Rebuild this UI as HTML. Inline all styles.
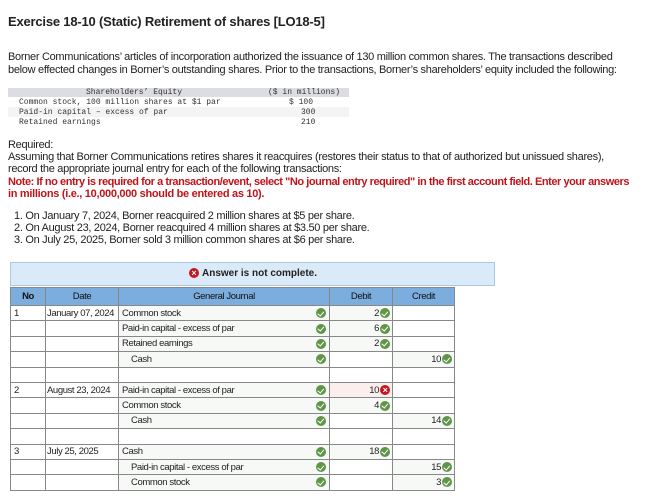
<!DOCTYPE html>
<html><head><meta charset="utf-8"><style>
*{margin:0;padding:0;box-sizing:border-box}
body{width:668px;height:499px;background:#fff;font-family:"Liberation Sans",Arial,sans-serif;color:#222;position:relative;overflow:hidden}
.a{position:absolute;white-space:nowrap}
.t{font-size:11px;letter-spacing:-0.3px}
.m{font-family:"Liberation Mono",monospace;font-size:8px;color:#333}
.red{color:#c0141a;font-weight:bold}
table{position:absolute;left:10px;top:287px;border-collapse:collapse;font-size:9.5px;letter-spacing:-0.4px}
td,th{border:1px solid #888;height:15.4px;line-height:13px;padding:0 3px;white-space:nowrap}
th{background:#7badde;height:18px;font-weight:normal;color:#111}
.g{background:#f7f9f7}
.r{text-align:right;padding-right:2px}
.ok{display:inline-block;width:10px;height:10px;border-radius:50%;background:#5f9548;vertical-align:middle;position:relative;margin-left:1px}
.ok:after{content:"";position:absolute;left:3px;top:1.5px;width:2.5px;height:4.5px;border:solid #fff;border-width:0 1.5px 1.5px 0;transform:rotate(40deg)}
.f{float:right;margin-top:1.5px}
.x{display:inline-block;width:10px;height:10px;border-radius:50%;background:#c4161c;color:#fff;font-size:9px;line-height:10px;text-align:center;font-weight:bold;vertical-align:middle;margin-left:1px}
</style></head><body>
<div class="a" style="left:8px;top:14px;font-size:13px;font-weight:bold;letter-spacing:-0.2px">Exercise 18-10 (Static) Retirement of shares [LO18-5]</div>
<div class="a t" style="left:8px;top:51px">Borner Communications’ articles of incorporation authorized the issuance of 130 million common shares. The transactions described</div>
<div class="a t" style="left:8px;top:64px">below effected changes in Borner’s outstanding shares. Prior to the transactions, Borner’s shareholders’ equity included the following:</div>
<div class="a" style="left:8px;top:88px;width:341px;height:9px;background:#dcdde2"></div>
<div class="a" style="left:8px;top:107px;width:341px;height:10px;background:#f4f4f4"></div>
<div class="a m" style="left:86px;top:88px">Shareholders’ Equity</div>
<div class="a m" style="left:268px;top:88px">($ in millions)</div>
<div class="a m" style="left:19px;top:98px">Common stock, 100 million shares at $1 par</div>
<div class="a m" style="left:19px;top:108px">Paid-in capital – excess of par</div>
<div class="a m" style="left:19px;top:118px">Retained earnings</div>
<div class="a m" style="left:289px;top:98px">$ 100</div>
<div class="a m" style="left:301px;top:108px">300</div>
<div class="a m" style="left:301px;top:118px">210</div>
<div class="a t" style="left:8px;top:139px">Required:</div>
<div class="a t" style="left:8px;top:151px">Assuming that Borner Communications retires shares it reacquires (restores their status to that of authorized but unissued shares),</div>
<div class="a t" style="left:8px;top:163px">record the appropriate journal entry for each of the following transactions:</div>
<div class="a t red" style="left:8px;top:176px;letter-spacing:-0.45px">Note: If no entry is required for a transaction/event, select "No journal entry required" in the first account field. Enter your answers</div>
<div class="a t red" style="left:8px;top:188px">in millions (i.e., 10,000,000 should be entered as 10).</div>
<div class="a t" style="left:14px;top:210px">1. On January 7, 2024, Borner reacquired 2 million shares at $5 per share.</div>
<div class="a t" style="left:14px;top:222px">2. On August 23, 2024, Borner reacquired 4 million shares at $3.50 per share.</div>
<div class="a t" style="left:14px;top:234px">3. On July 25, 2025, Borner sold 3 million common shares at $6 per share.</div>
<div class="a" style="left:10px;top:262px;width:485px;height:24px;background:#dbeaf8;border:1px solid #a9c8e6;text-align:center;font-size:10px;font-weight:bold;line-height:22px"><span class="x" style="margin-right:3px">×</span>Answer is not complete.</div>
<table>
<colgroup><col style="width:35px"><col style="width:73px"><col style="width:211px"><col style="width:63px"><col style="width:62px"></colgroup>
<tr><th style="font-weight:bold">No</th><th>Date</th><th>General Journal</th><th>Debit</th><th>Credit</th></tr>
<tr><td>1</td><td style="padding:0 1px">January 07, 2024</td><td class="g">Common stock<span class="ok f"></span></td><td class="g r">2<span class="ok"></span></td><td></td></tr>
<tr><td></td><td></td><td class="g">Paid-in capital - excess of par<span class="ok f"></span></td><td class="g r">6<span class="ok"></span></td><td></td></tr>
<tr><td></td><td></td><td class="g">Retained earnings<span class="ok f"></span></td><td class="g r">2<span class="ok"></span></td><td></td></tr>
<tr><td></td><td></td><td class="g" style="padding-left:12px">Cash<span class="ok f"></span></td><td></td><td class="g r">10<span class="ok"></span></td></tr>
<tr><td></td><td></td><td></td><td></td><td></td></tr>
<tr><td>2</td><td style="padding:0 1px">August 23, 2024</td><td class="g">Paid-in capital - excess of par<span class="ok f"></span></td><td class="r" style="background:#fdeeee">10<span class="x">×</span></td><td></td></tr>
<tr><td></td><td></td><td class="g">Common stock<span class="ok f"></span></td><td class="g r">4<span class="ok"></span></td><td></td></tr>
<tr><td></td><td></td><td class="g" style="padding-left:12px">Cash<span class="ok f"></span></td><td></td><td class="g r">14<span class="ok"></span></td></tr>
<tr><td></td><td></td><td></td><td></td><td></td></tr>
<tr><td>3</td><td style="padding:0 1px">July 25, 2025</td><td class="g">Cash<span class="ok f"></span></td><td class="g r">18<span class="ok"></span></td><td></td></tr>
<tr><td></td><td></td><td class="g" style="padding-left:12px">Paid-in capital - excess of par<span class="ok f"></span></td><td></td><td class="g r">15<span class="ok"></span></td></tr>
<tr><td></td><td></td><td class="g" style="padding-left:12px">Common stock<span class="ok f"></span></td><td></td><td class="g r">3<span class="ok"></span></td></tr>
</table>
</body></html>
